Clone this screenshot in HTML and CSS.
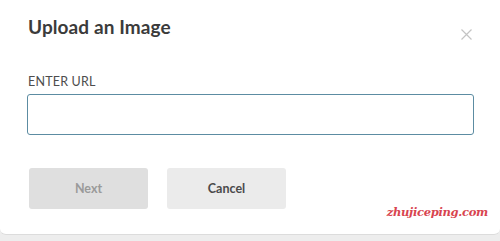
FILE: index.html
```html
<!DOCTYPE html>
<html lang="en">

<head>
    <meta charset="UTF-8">
    <meta name="viewport" content="width=device-width, initial-scale=1.0">
    <title>Upload an Image</title>
    <link rel="stylesheet" href="styles.css">
</head>

<body>
    <div class="modal">
        <div class="modal-header">
            <h2>Upload an Image</h2>
            <button class="close-btn" aria-label="Close">
                <svg width="11" height="11" viewBox="0 0 11 11">
                    <path d="M0.5 0.5 L10.5 10.5 M10.5 0.5 L0.5 10.5" stroke="#c4c4c4" stroke-width="1.2" fill="none" />
                </svg>
            </button>
        </div>

        <label class="field-label" for="url">ENTER URL</label>
        <input class="url-input" id="url" type="text">

        <div class="actions">
            <button class="btn btn-next" disabled>Next</button>
            <button class="btn btn-cancel">Cancel</button>
            <span class="watermark">zhujiceping.com</span>
        </div>
    </div>
</body>

</html>
```

FILE: styles.css
```css
body {
    margin: 0;
    background-color: #ededed;
    font-family: Lato, "Open Sans", sans-serif;
}

.modal {
    background-color: #fff;
    height: 235px;
    box-sizing: border-box;
    padding: 15px 26px 0 27px;
    border-bottom: 1px solid #dcdcdc;
    border-radius: 0 0 6px 6px;
}

.modal-header {
    display: flex;
    justify-content: space-between;
    align-items: flex-start;
}

.modal-header h2 {
    margin: 0 0 0 1px;
    font-size: 19px;
    font-weight: 700;
    color: #3b3b3b;
    letter-spacing: 0.1px;
}

.close-btn {
    margin-top: 14px;
    margin-right: 2px;
    padding: 0;
    border: none;
    background: none;
    line-height: 0;
}

.field-label {
    display: block;
    margin: 34px 0 5px 1px;
    font-size: 12.5px;
    letter-spacing: 0.2px;
    color: #4d4d4d;
}

.url-input {
    display: block;
    width: 100%;
    height: 41px;
    box-sizing: border-box;
    border: 1px solid #5c8ca2;
    border-radius: 3px;
    outline: none;
}

.actions {
    display: flex;
    align-items: flex-start;
    gap: 19px;
    margin-top: 33px;
    padding-left: 2px;
}

.btn {
    width: 119px;
    height: 41px;
    border: none;
    border-radius: 3px;
    font-family: Lato, "Open Sans", sans-serif;
    font-size: 12.5px;
    font-weight: 700;
}

.btn-next {
    background-color: #dfdfdf;
    color: #9a9a9a;
}

.btn-cancel {
    background-color: #ebebeb;
    color: #4a4a4a;
}

.watermark {
    margin: 37px -14px 0 auto;
    font-family: "DejaVu Serif", serif;
    font-style: italic;
    font-weight: 700;
    font-size: 11.5px;
    letter-spacing: -0.3px;
    color: #d8444f;
}
```
